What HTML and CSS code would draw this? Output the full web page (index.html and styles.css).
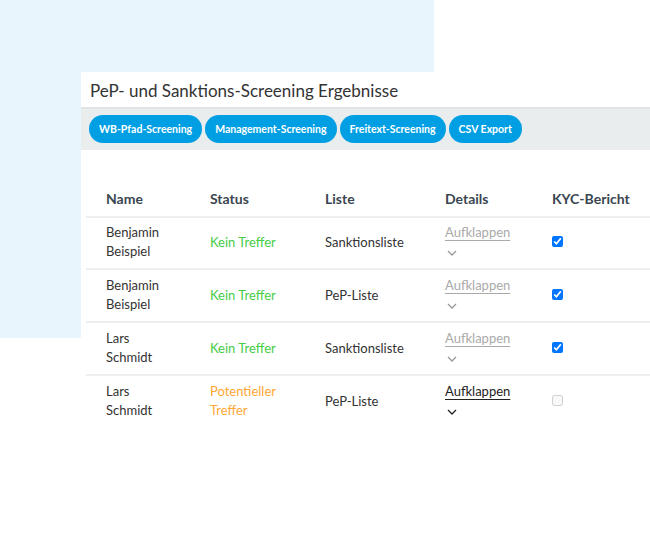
FILE: index.html
```html
<!DOCTYPE html>
<html lang="de">
<head>
  <meta charset="UTF-8">
  <title>PeP- und Sanktions-Screening Ergebnisse</title>
  <link rel="stylesheet" href="styles.css">
</head>
<body>
  <div class="stage">
    <div class="card">
      <h1 class="card-title">PeP- und Sanktions-Screening Ergebnisse</h1>
      <div class="toolbar">
        <button class="pill">WB-Pfad-Screening</button>
        <button class="pill">Management-Screening</button>
        <button class="pill">Freitext-Screening</button>
        <button class="pill">CSV Export</button>
      </div>

      <table class="results">
        <thead>
          <tr>
            <th class="col-name">Name</th>
            <th class="col-status">Status</th>
            <th class="col-list">Liste</th>
            <th class="col-details">Details</th>
            <th>KYC-Bericht</th>
          </tr>
        </thead>
        <tbody>
          <tr>
            <td>Benjamin<br>Beispiel</td>
            <td class="ok">Kein Treffer</td>
            <td>Sanktionsliste</td>
            <td class="details muted"><span class="toggle">Aufklappen</span><br><svg class="chev" viewBox="0 0 10 6"><path d="M1 1l4 4 4-4"/></svg></td>
            <td><input type="checkbox" checked></td>
          </tr>
          <tr>
            <td>Benjamin<br>Beispiel</td>
            <td class="ok">Kein Treffer</td>
            <td>PeP-Liste</td>
            <td class="details muted"><span class="toggle">Aufklappen</span><br><svg class="chev" viewBox="0 0 10 6"><path d="M1 1l4 4 4-4"/></svg></td>
            <td><input type="checkbox" checked></td>
          </tr>
          <tr>
            <td>Lars<br>Schmidt</td>
            <td class="ok">Kein Treffer</td>
            <td>Sanktionsliste</td>
            <td class="details muted"><span class="toggle">Aufklappen</span><br><svg class="chev" viewBox="0 0 10 6"><path d="M1 1l4 4 4-4"/></svg></td>
            <td><input type="checkbox" checked></td>
          </tr>
          <tr>
            <td>Lars<br>Schmidt</td>
            <td class="warn">Potentieller<br>Treffer</td>
            <td>PeP-Liste</td>
            <td class="details"><span class="toggle">Aufklappen</span><br><svg class="chev" viewBox="0 0 10 6"><path d="M1 1l4 4 4-4"/></svg></td>
            <td><input type="checkbox" disabled></td>
          </tr>
        </tbody>
      </table>
    </div>
  </div>
</body>
</html>
```

FILE: styles.css
```css
/* General styles */
html, body {
  margin: 0;
  padding: 0;
  background: #ffffff;
  overflow: hidden;
}

body {
  font-family: 'Lato', 'Open Sans', sans-serif;
  color: #333;
  width: 650px;
  height: 538px;
}

/* light blue block behind the card */
.stage {
  height: 538px;
  padding: 72px 0 0 81px;
  box-sizing: border-box;
  background: linear-gradient(#e8f5fd, #e8f5fd) no-repeat 0 0 / 434px 338px;
}

.card {
  width: 569px;
  background: #ffffff;
}

.card-title {
  margin: 0;
  height: 35px;
  padding-left: 9px;
  font-size: 17px;
  font-weight: normal;
  line-height: 37px;
  color: #333;
}

.toolbar {
  display: flex;
  gap: 3px;
  padding: 6px 8px 7px;
  background: #e9eded;
  border-top: 2px solid #dfe3e4;
}

.pill {
  height: 28px;
  padding: 0 10px;
  border: none;
  border-radius: 14px;
  background: #009fe3;
  color: #ffffff;
  font-family: inherit;
  font-size: 10.5px;
  font-weight: bold;
}

.results {
  margin: 31px 0 0 5px;
  border-collapse: collapse;
  width: 564px;
  font-size: 13px;
}

.results th {
  text-align: left;
  font-size: 14px;
  font-weight: bold;
  color: #3b4650;
  height: 35px;
  padding: 0 0 0 20px;
  border-bottom: 2px solid #eeeeee;
}

.col-name { width: 84px; }
.col-status { width: 95px; }
.col-list { width: 100px; }
.col-details { width: 87px; }

.results td {
  height: 38px;
  padding: 6px 0 7px 20px;
  line-height: 19px;
  border-bottom: 2px solid #eeeeee;
  vertical-align: middle;
}

.results tbody tr:first-child td {
  padding-top: 5px;
}

.results tbody tr:last-child td {
  border-bottom: none;
}

.ok { color: #46cd46; }
.warn { color: #ffa734; }

.toggle {
  text-decoration: underline;
  text-underline-offset: 3px;
  color: #222;
}

.muted .toggle { color: #aaaaaa; }

.chev {
  width: 10px;
  height: 6px;
  margin-left: 2px;
  fill: none;
  stroke: #222;
  stroke-width: 1.3;
}

.muted .chev { stroke: #999999; }

.results input[type="checkbox"] {
  width: 11px;
  height: 11px;
  margin: 0;
}
```
